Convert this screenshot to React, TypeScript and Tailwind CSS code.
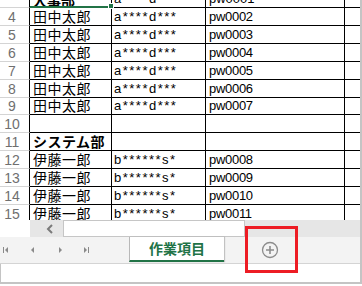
import React from 'react'

type Row = { n: number; b?: string; c?: string; d?: string; bold?: boolean; h: string }

const ROWS: Row[] = [
  { n: 4, b: '田中太郎', c: 'a****d***', d: 'pw0002', h: 'h-[18px]' },
  { n: 5, b: '田中太郎', c: 'a****d***', d: 'pw0003', h: 'h-[18px]' },
  { n: 6, b: '田中太郎', c: 'a****d***', d: 'pw0004', h: 'h-[18px]' },
  { n: 7, b: '田中太郎', c: 'a****d***', d: 'pw0005', h: 'h-[18px]' },
  { n: 8, b: '田中太郎', c: 'a****d***', d: 'pw0006', h: 'h-[18px]' },
  { n: 9, b: '田中太郎', c: 'a****d***', d: 'pw0007', h: 'h-[17px]' },
  { n: 10, h: 'h-[18px]' },
  { n: 11, b: 'システム部', bold: true, h: 'h-[18px]' },
  { n: 12, b: '伊藤一郎', c: 'b******s*', d: 'pw0008', h: 'h-[18px]' },
  { n: 13, b: '伊藤一郎', c: 'b******s*', d: 'pw0009', h: 'h-[18px]' },
  { n: 14, b: '伊藤一郎', c: 'b******s*', d: 'pw0010', h: 'h-[18px]' },
  { n: 15, b: '伊藤一郎', c: 'b******s*', d: 'pw0011', h: 'h-[18px]' },
]

const jp = 'font-["Noto_Sans_CJK_JP",sans-serif]'
const latin = 'font-["Liberation_Sans",Arial,sans-serif]'

function SheetRow({ row }: { row: Row }) {
  return (
    <div className={`flex shrink-0 ${row.h}`}>
      <div className={`flex w-[30px] shrink-0 items-center justify-center border-r border-b border-r-black border-b-[#d4d4d4] pr-[5px] text-[14px] leading-none text-[#6f6f6f] ${latin}`}>
        {row.n}
      </div>
      <div className={`flex w-[82px] shrink-0 items-end overflow-hidden border-r border-b border-black pl-[3px] text-[14px] leading-[17px] tracking-[0.5px] text-black ${jp} ${row.bold ? 'font-bold' : ''}`}>
        {row.b}
      </div>
      <div className={`flex w-[94px] shrink-0 items-end overflow-hidden border-r border-b border-black pl-[2px] text-[13px] leading-[16px] tracking-[1.5px] text-black ${latin}`}>
        {row.c}
      </div>
      <div className={`flex w-[139px] shrink-0 items-end overflow-hidden border-r border-b border-black pl-[3px] text-[13px] leading-[16px] tracking-[-0.3px] text-black ${latin}`}>
        {row.d}
      </div>
      <div className="flex-1 border-b border-black" />
    </div>
  )
}

function NavArrow({ kind }: { kind: 'first' | 'prev' | 'next' | 'last' }) {
  return (
    <svg width="8" height="8" viewBox="0 0 8 8" fill="#8a8a8a">
      {kind === 'first' && (
        <>
          <rect x="0" y="1" width="1" height="6" />
          <path d="M5 1 L2 4 L5 7 Z" />
        </>
      )}
      {kind === 'prev' && <path d="M5 1 L2 4 L5 7 Z" />}
      {kind === 'next' && <path d="M3 1 L6 4 L3 7 Z" />}
      {kind === 'last' && (
        <>
          <path d="M2 1 L5 4 L2 7 Z" />
          <rect x="6" y="1" width="1" height="6" />
        </>
      )}
    </svg>
  )
}

export default function App() {
  return (
    <div className="relative h-[286px] w-[362px] overflow-hidden bg-white">
      <div className="flex h-[284px] w-[362px] flex-col border-r-2 border-b-2 border-[#c4c4c4]">
        {/* grid */}
        <div className="relative flex h-[220px] shrink-0 flex-col overflow-hidden">
          {/* row 3, mostly scrolled out */}
          <div className="flex h-[8px] shrink-0">
            <div className="w-[30px] shrink-0 border-r border-b border-r-black border-b-[#d4d4d4]" />
            <div className={`flex w-[82px] shrink-0 items-end overflow-hidden border-r border-b-2 border-r-black border-b-[#217346] pl-[3px] text-[14px] leading-[17px] font-bold ${jp}`}>
              <span className="-mb-[3px]">人事部</span>
            </div>
            <div className={`flex w-[94px] shrink-0 items-end overflow-hidden border-r border-b border-black pl-[2px] text-[13px] leading-[16px] tracking-[1.5px] ${latin}`}>
              a****d***
            </div>
            <div className={`flex w-[139px] shrink-0 items-end overflow-hidden border-r border-b border-black pl-[3px] text-[13px] leading-[16px] ${latin}`}>
              pw0001
            </div>
            <div className="flex-1 border-b border-black" />
          </div>
          {ROWS.map((r) => (
            <SheetRow key={r.n} row={r} />
          ))}
          {/* fill handle */}
          <div className="absolute top-[3px] left-[108px] h-[6px] w-[6px] border border-white bg-[#217346]" />
        </div>

        {/* horizontal scroll strip */}
        <div className="flex h-[17px] shrink-0">
          <div className="w-[30px] shrink-0 bg-white" />
          <div className="flex w-[33px] shrink-0 items-center justify-center bg-[#e6e6e6] pl-[6px]">
            <svg width="8" height="10" viewBox="0 0 8 10">
              <path d="M6 1 L2 5 L6 9" fill="none" stroke="#7a7a7a" strokeWidth="2" />
            </svg>
          </div>
          <div className="w-[182px] shrink-0 border border-[#c6c6c6] bg-white" />
          <div className="flex-1 bg-[#e6e6e6]" />
        </div>

        {/* sheet tabs */}
        <div className="flex h-[27px] shrink-0 border-b border-[#d4d4d4] bg-[#f3f3f3]">
          <div className="flex w-[129px] shrink-0 items-center">
            <div className="flex w-[12px] justify-center pl-[1px]"><NavArrow kind="first" /></div>
            <div className="ml-[15px] flex w-[12px] justify-center"><NavArrow kind="prev" /></div>
            <div className="ml-[15px] flex w-[12px] justify-center"><NavArrow kind="next" /></div>
            <div className="ml-[14px] flex w-[12px] justify-center"><NavArrow kind="last" /></div>
          </div>
          <div className={`flex h-[25px] w-[95px] shrink-0 items-center justify-center border-l border-b-2 border-l-[#b8b8b8] border-b-[#217346] bg-white text-[14px] font-bold text-[#217346] shadow-[1px_0_1px_rgba(0,0,0,0.2)] ${jp}`}>
            作業項目
          </div>
          <div className="flex w-[95px] shrink-0 items-center justify-center pr-[3px]">
            <svg width="18" height="18" viewBox="0 0 18 18">
              <circle cx="9" cy="9" r="7.5" fill="none" stroke="#8c8c8c" strokeWidth="1.3" />
              <path d="M9 5 V13 M5 9 H13" stroke="#8c8c8c" strokeWidth="1.6" />
            </svg>
          </div>
        </div>

        <div className="flex-1 border-l border-[#c4c4c4] bg-white" />
      </div>

      {/* red highlight */}
      <div className="absolute top-[226px] left-[245px] h-[47px] w-[53px] border-[3px] border-[#ed1c24]" />
    </div>
  )
}
